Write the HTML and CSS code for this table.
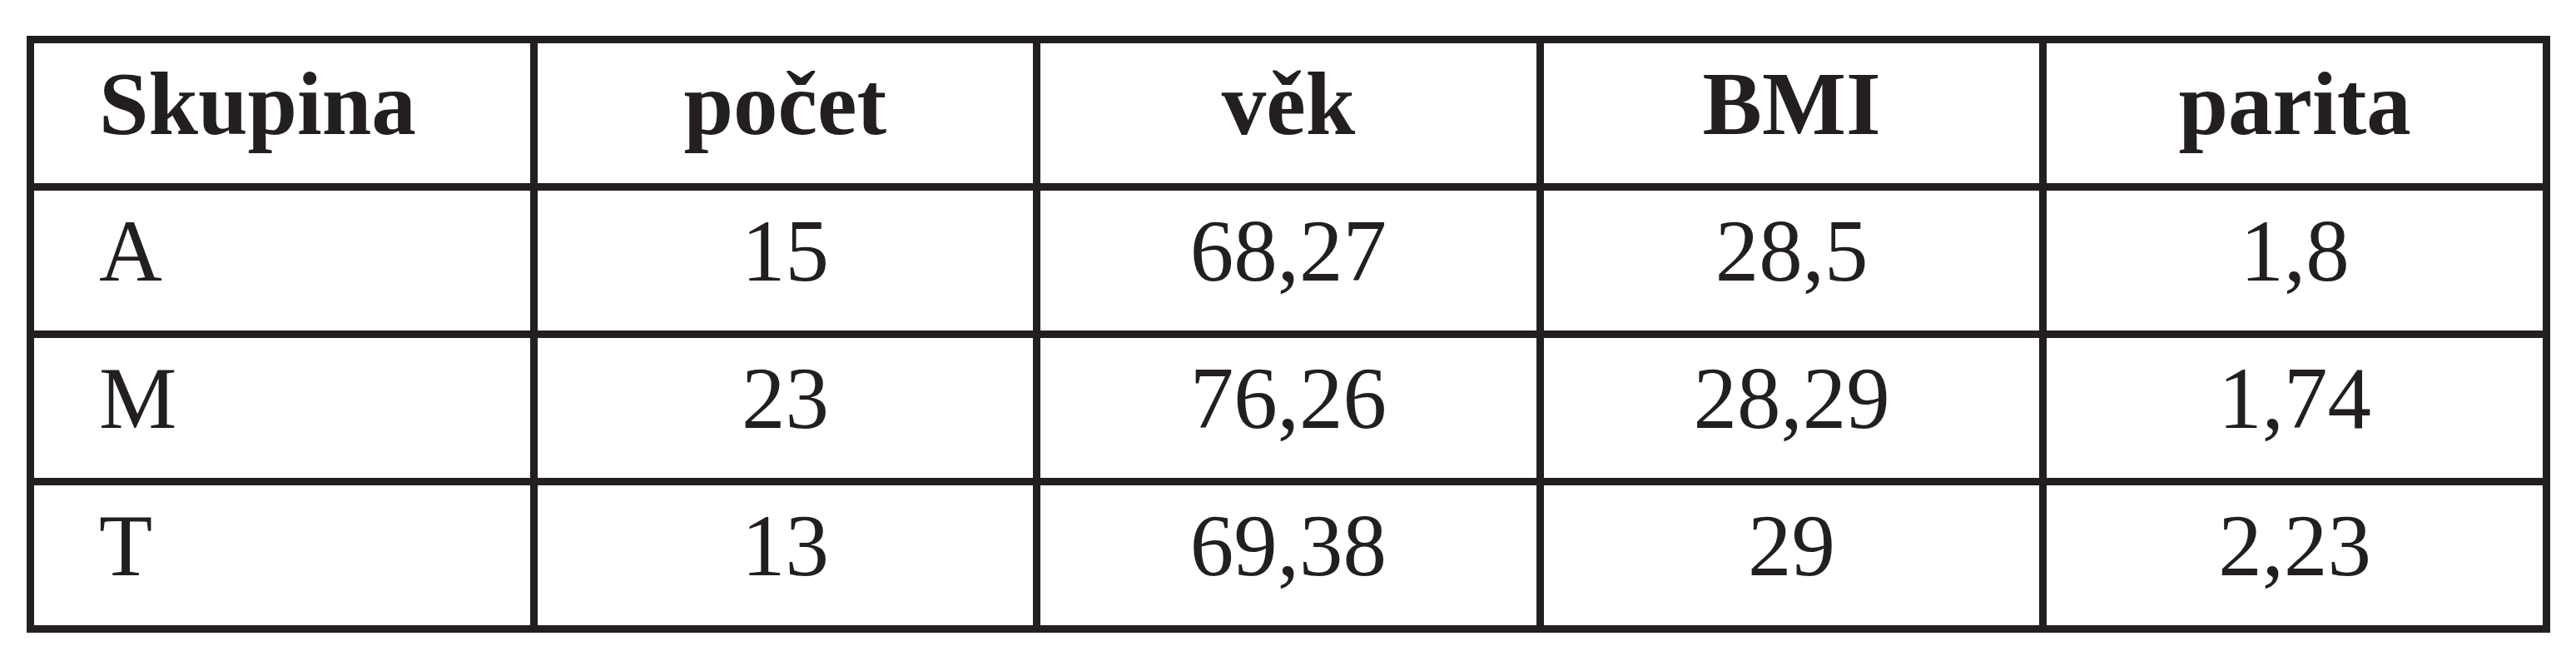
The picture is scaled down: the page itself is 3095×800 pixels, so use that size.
FILE: index.html
```html
<!DOCTYPE html>
<html lang="cs">
<head>
<meta charset="utf-8">
<title>Skupiny</title>
<link rel="stylesheet" href="styles.css">
</head>
<body>
<table class="data">
  <thead>
    <tr>
      <th class="first">Skupina</th>
      <th>počet</th>
      <th>věk</th>
      <th>BMI</th>
      <th>parita</th>
    </tr>
  </thead>
  <tbody>
    <tr>
      <td class="first">A</td>
      <td>15</td>
      <td>68,27</td>
      <td>28,5</td>
      <td>1,8</td>
    </tr>
    <tr>
      <td class="first">M</td>
      <td>23</td>
      <td>76,26</td>
      <td>28,29</td>
      <td>1,74</td>
    </tr>
    <tr>
      <td class="first">T</td>
      <td>13</td>
      <td>69,38</td>
      <td>29</td>
      <td>2,23</td>
    </tr>
  </tbody>
</table>
</body>
</html>
```

FILE: styles.css
```css
html, body {
  background: #ffffff;
}

body {
  margin: 43px 0 0 32px;
  font-family: "Liberation Serif", "Times New Roman", serif;
  color: #231f20;
}

.data {
  width: 3032px;
  table-layout: fixed;
  border-collapse: separate;
  border-spacing: 9px;
  background: #231f20;
}

.data th,
.data td {
  background: #ffffff;
  height: 168px;
  padding: 0;
  vertical-align: top;
  line-height: 146px;
  text-align: center;
  white-space: nowrap;
}

.data th {
  font-size: 107px;
  font-weight: bold;
}

.data td {
  font-size: 105px;
  font-weight: normal;
}

.data .first {
  text-align: left;
  padding-left: 78px;
}
```
